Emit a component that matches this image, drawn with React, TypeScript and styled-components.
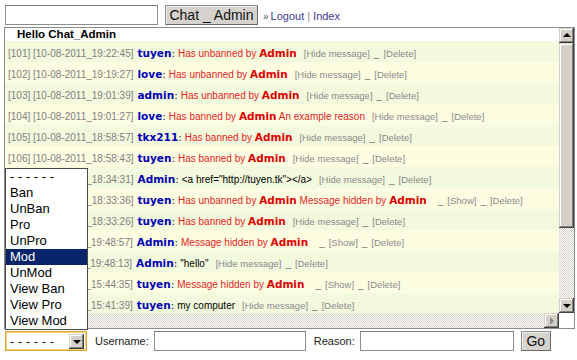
import React from 'react';
import styled, { createGlobalStyle } from 'styled-components';

const Global = createGlobalStyle`
	html, body {
		margin: 0;
		padding: 0;
		background: #fff;
	}
	body {
		font-family: "Liberation Sans", Arial, sans-serif;
		color: #000;
	}
	* {
		box-sizing: border-box;
	}
`;

type Part = { t: string; k: 'red' | 'redBold' | 'plain' };
type Msg = {
	id: number;
	stamp: string;
	user: string;
	parts: Part[];
	hidden?: boolean;
};

const unbanned: Part[] = [
	{ t: 'Has unbanned by ', k: 'red' },
	{ t: 'Admin', k: 'redBold' },
];
const banned: Part[] = [
	{ t: 'Has banned by ', k: 'red' },
	{ t: 'Admin', k: 'redBold' },
];
const hiddenBy: Part[] = [
	{ t: 'Message hidden by ', k: 'red' },
	{ t: 'Admin', k: 'redBold' },
];

const messages: Msg[] = [
	{ id: 101, stamp: '10-08-2011_19:22:45', user: 'tuyen', parts: unbanned },
	{ id: 102, stamp: '10-08-2011_19:19:27', user: 'love', parts: unbanned },
	{ id: 103, stamp: '10-08-2011_19:01:39', user: 'admin', parts: unbanned },
	{
		id: 104,
		stamp: '10-08-2011_19:01:27',
		user: 'love',
		parts: [...banned, { t: ' An example reason', k: 'red' }],
	},
	{ id: 105, stamp: '10-08-2011_18:58:57', user: 'tkx211', parts: banned },
	{ id: 106, stamp: '10-08-2011_18:58:43', user: 'tuyen', parts: banned },
	{
		id: 107,
		stamp: '10-08-2011_18:34:31',
		user: 'Admin',
		parts: [{ t: '<a href="http://tuyen.tk"></a>', k: 'plain' }],
	},
	{
		id: 108,
		stamp: '10-08-2011_18:33:36',
		user: 'tuyen',
		parts: [...unbanned, { t: ' ', k: 'red' }, ...hiddenBy],
		hidden: true,
	},
	{ id: 109, stamp: '10-08-2011_18:33:26', user: 'tuyen', parts: banned },
	{ id: 110, stamp: '09-08-2011_19:48:57', user: 'Admin', parts: hiddenBy, hidden: true },
	{
		id: 111,
		stamp: '09-08-2011_19:48:13',
		user: 'Admin',
		parts: [{ t: '"hello"', k: 'plain' }],
	},
	{ id: 112, stamp: '09-08-2011_15:44:35', user: 'tuyen', parts: hiddenBy, hidden: true },
	{
		id: 113,
		stamp: '09-08-2011_15:41:39',
		user: 'tuyen',
		parts: [{ t: 'my computer', k: 'plain' }],
	},
];

const options = [
	'- - - - - -',
	'Ban',
	'UnBan',
	'Pro',
	'UnPro',
	'Mod',
	'UnMod',
	'View Ban',
	'View Pro',
	'View Mod',
];

/* ── top bar ─────────────────────────────────────────────── */

const TopBar = styled.div`
	display: flex;
	align-items: center;
	padding: 5px 0 0 5px;
	height: 24px;
`;

const TextInput = styled.input<{ $w: number }>`
	width: ${({ $w }) => $w}px;
	height: 20px;
	border: 1px solid #8d8d8d;
	border-top-color: #7a7a7a;
	background: #fff;
	padding: 0 2px;
	font: 12px "Liberation Sans", Arial, sans-serif;
`;

const PushButton = styled.button<{ $w: number }>`
	width: ${({ $w }) => $w}px;
	height: 20px;
	padding: 0;
	background: #d6d3ce;
	border: 1px solid #8f8f8f;
	border-right-color: #6a6a6a;
	border-bottom-color: #6a6a6a;
	box-shadow: inset 1px 1px #eeede9;
	font: 14px "Liberation Sans", Arial, sans-serif;
	color: #111;
`;

const NavLinks = styled.div`
	margin-left: 5px;
	padding-top: 3px;
	font-size: 11px;
	color: #3d3a8f;
`;

const Raquo = styled.span`
	font-size: 10px;
	color: #555;
	margin-right: 2px;
`;

const NavSep = styled.span`
	color: #888;
	margin: 0 3px;
`;

/* ── chat box ────────────────────────────────────────────── */

const ChatBox = styled.div`
	margin: 3px 0 0 4px;
	width: 571px;
	height: 302px;
	border: 1px solid #8c8c8c;
	display: grid;
	grid-template-columns: 1fr 15px;
	grid-template-rows: 1fr 15px;
	background: #fff;
`;

const Viewport = styled.div`
	overflow: hidden;
	white-space: nowrap;
`;

const Hello = styled.div`
	height: 13px;
	line-height: 13px;
	padding-left: 12px;
	font-size: 11.5px;
	font-weight: bold;
	background: #fff;
`;

const MsgRow = styled.div<{ $alt: boolean }>`
	height: 21px;
	line-height: 21px;
	padding-left: 3px;
	background: ${({ $alt }) => ($alt ? '#fdfde2' : '#f3f9dc')};
`;

const Stamp = styled.span`
	font-size: 10px;
	color: #808080;
	margin-right: 4px;
`;

const Name = styled.span`
	font-family: "DejaVu Sans", Verdana, sans-serif;
	font-size: 10.5px;
	font-weight: bold;
	color: #0000b4;
`;

const Colon = styled.span`
	font-family: "DejaVu Sans", Verdana, sans-serif;
	font-size: 10.5px;
	color: #1a1a40;
	margin-right: 3px;
`;

const Said = styled.span<{ $k: Part['k'] }>`
	font-family: ${({ $k }) =>
		$k === 'redBold' ? '"DejaVu Sans", Verdana, sans-serif' : 'inherit'};
	font-size: ${({ $k }) => ($k === 'redBold' ? '10.5px' : '10px')};
	font-weight: ${({ $k }) => ($k === 'redBold' ? 'bold' : 'normal')};
	color: ${({ $k }) =>
		$k === 'plain' ? '#000' : $k === 'redBold' ? '#dd0000' : '#e52424'};
	white-space: pre;
`;

const Actions = styled.span`
	margin-left: 7px;
	font-size: 9.5px;
	color: #8a8a8a;
`;

const Under = styled.span`
	font-size: 10px;
	font-weight: bold;
	color: #000;
	margin: 0 4px;
`;

/* ── classic scrollbars ──────────────────────────────────── */

const bevel = `
	background: #d4d0c8;
	box-shadow: inset -1px -1px #404040, inset 1px 1px #d4d0c8,
		inset -2px -2px #808080, inset 2px 2px #fff;
`;

const VScroll = styled.div`
	display: flex;
	flex-direction: column;
`;

const HScroll = styled.div`
	display: flex;
`;

const ScrollBtn = styled.div`
	width: 15px;
	height: 15px;
	flex: none;
	display: flex;
	align-items: center;
	justify-content: center;
	${bevel}
`;

const Thumb = styled.div<{ $len: number }>`
	height: ${({ $len }) => $len}px;
	flex: none;
	${bevel}
`;

const Track = styled.div`
	flex: 1;
	background: repeating-conic-gradient(#d4d0c8 0 25%, #fff 0 50%) 0 0 / 2px 2px;
`;

const Arrow = styled.span<{ $dir: 'up' | 'down' | 'left' | 'right'; $dim?: boolean }>`
	width: 0;
	height: 0;
	border: 4px solid transparent;
	${({ $dir, $dim }) => {
		const c = $dim ? '#8a8a8a' : '#000';
		if ($dir === 'up') return `border-bottom-color: ${c}; border-top-width: 0; margin-top: -1px;`;
		if ($dir === 'down') return `border-top-color: ${c}; border-bottom-width: 0; margin-top: 1px;`;
		if ($dir === 'left') return `border-right-color: ${c}; border-left-width: 0;`;
		return `border-left-color: ${c}; border-right-width: 0; margin-left: 1px;`;
	}}
`;

const Corner = styled.div`
	background: #fff;
`;

/* ── bottom form ─────────────────────────────────────────── */

const BottomBar = styled.div`
	display: flex;
	align-items: center;
	margin-top: 2px;
	padding-left: 5px;
	height: 20px;
	font-size: 11px;
	color: #222;
`;

const SelectWrap = styled.div`
	position: relative;
	width: 82px;
	height: 20px;
`;

const SelectBox = styled.div`
	width: 82px;
	height: 20px;
	border: 1px solid #d9a53c;
	box-shadow: inset 0 0 0 1px #f7d37a;
	background: #fff;
	display: flex;
	align-items: center;
	padding: 0 2px 0 4px;
	font-size: 13px;
`;

const SelectText = styled.span`
	flex: 1;
`;

const DropList = styled.div`
	position: absolute;
	left: 0;
	bottom: calc(100% + 1px);
	width: 83px;
	border: 1px solid #4a4a4a;
	background: #fff;
`;

const DropItem = styled.div<{ $active?: boolean }>`
	height: 16px;
	line-height: 16px;
	padding-left: 4px;
	font-size: 13px;
	background: ${({ $active }) => ($active ? '#0a246a' : '#fff')};
	color: ${({ $active }) => ($active ? '#fff' : '#000')};
`;

const Label = styled.span<{ $gap: number }>`
	margin: 0 5px 0 ${({ $gap }) => $gap}px;
`;

const Spacer = styled.span`
	width: 7px;
`;

export default function App() {
	return (
		<>
			<Global />
			<TopBar>
				<TextInput $w={153} />
				<Spacer />
				<PushButton $w={93}>Chat _ Admin</PushButton>
				<NavLinks>
					<Raquo>»</Raquo>Logout<NavSep>|</NavSep>Index
				</NavLinks>
			</TopBar>

			<ChatBox>
				<Viewport>
					<Hello>Hello Chat_Admin</Hello>
					{messages.map((m, i) => (
						<MsgRow key={m.id} $alt={i % 2 === 1}>
							<Stamp>
								[{m.id}] [{m.stamp}]
							</Stamp>
							<Name>{m.user}</Name>
							<Colon>:</Colon>
							{m.parts.map((p, j) => (
								<Said key={j} $k={p.k}>
									{p.t}
								</Said>
							))}
							<Actions>
								{m.hidden ? (
									<>
										<Under>_</Under>[Show]<Under>_</Under>[Delete]
									</>
								) : (
									<>
										[Hide message]<Under>_</Under>[Delete]
									</>
								)}
							</Actions>
						</MsgRow>
					))}
				</Viewport>
				<VScroll>
					<ScrollBtn>
						<Arrow $dir="up" />
					</ScrollBtn>
					<Thumb $len={185} />
					<Track />
					<ScrollBtn>
						<Arrow $dir="down" />
					</ScrollBtn>
				</VScroll>
				<HScroll>
					<ScrollBtn>
						<Arrow $dir="left" $dim />
					</ScrollBtn>
					<Track />
					<ScrollBtn>
						<Arrow $dir="right" $dim />
					</ScrollBtn>
				</HScroll>
				<Corner />
			</ChatBox>

			<BottomBar>
				<SelectWrap>
					<DropList>
						{options.map((o) => (
							<DropItem key={o} $active={o === 'Mod'}>
								{o}
							</DropItem>
						))}
					</DropList>
					<SelectBox>
						<SelectText>- - - - - -</SelectText>
						<ScrollBtn>
							<Arrow $dir="down" />
						</ScrollBtn>
					</SelectBox>
				</SelectWrap>
				<Label $gap={8}>Username:</Label>
				<TextInput $w={152} />
				<Label $gap={8}>Reason:</Label>
				<TextInput $w={154} />
				<Spacer />
				<PushButton $w={30}>Go</PushButton>
			</BottomBar>
		</>
	);
}
